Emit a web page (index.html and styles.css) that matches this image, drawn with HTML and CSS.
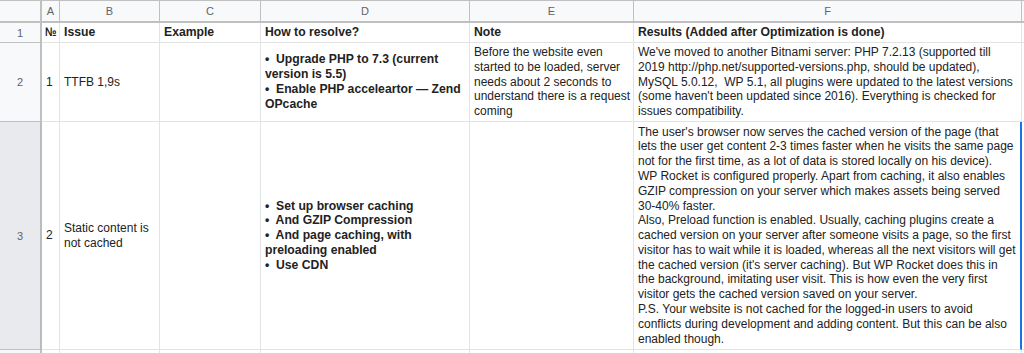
FILE: index.html
```html
<!DOCTYPE html>
<html>
<head>
<meta charset="utf-8">
<link rel="stylesheet" href="styles.css">
</head>
<body>
<div class="sheet">
  <div class="corner"></div>
  <div class="colhead">A</div>
  <div class="colhead">B</div>
  <div class="colhead">C</div>
  <div class="colhead">D</div>
  <div class="colhead">E</div>
  <div class="colhead">F</div>
  <div class="colhead rest"></div>

  <div class="rowhead">1</div>
  <div class="cell narrow bold"><span class="numero">№</span></div>
  <div class="cell bold">Issue</div>
  <div class="cell bold">Example</div>
  <div class="cell bold">How to resolve?</div>
  <div class="cell bold">Note</div>
  <div class="cell bold">Results (Added after Optimization is done)</div>
  <div class="cell rest"></div>

  <div class="rowhead">2</div>
  <div class="cell narrow">1</div>
  <div class="cell">TTFB 1,9s</div>
  <div class="cell"></div>
  <div class="cell bold">
    <p>•&nbsp; Upgrade PHP to 7.3 (current<br>version is 5.5)</p>
    <p>•&nbsp; Enable PHP acceleartor — Zend<br>OPcache</p>
  </div>
  <div class="cell">
    <p>Before the website even<br>started to be loaded, server<br>needs about 2 seconds to<br>understand there is a request<br>coming</p>
  </div>
  <div class="cell">
    <p>We've moved to another Bitnami server: PHP 7.2.13 (supported till<br>2019 http://php.net/supported-versions.php, should be updated),<br>MySQL 5.0.12,&nbsp; WP 5.1, all plugins were updated to the latest versions<br>(some haven't been updated since 2016). Everything is checked for<br>issues compatibility.</p>
  </div>
  <div class="cell rest"></div>

  <div class="rowhead selected">3</div>
  <div class="cell narrow">2</div>
  <div class="cell"><p>Static content is<br>not cached</p></div>
  <div class="cell"></div>
  <div class="cell bold">
    <p>•&nbsp; Set up browser caching</p>
    <p>•&nbsp; And GZIP Compression</p>
    <p>•&nbsp; And page caching, with<br>preloading enabled</p>
    <p>•&nbsp; Use CDN</p>
  </div>
  <div class="cell"></div>
  <div class="cell active">
    <p>The user's browser now serves the cached version of the page (that<br>lets the user get content 2-3 times faster when he visits the same page<br>not for the first time, as a lot of data is stored locally on his device).</p>
    <p>WP Rocket is configured properly. Apart from caching, it also enables<br>GZIP compression on your server which makes assets being served<br>30-40% faster.</p>
    <p>Also, Preload function is enabled. Usually, caching plugins create a<br>cached version on your server after someone visits a page, so the first<br>visitor has to wait while it is loaded, whereas all the next visitors will get<br>the cached version (it's server caching). But WP Rocket does this in<br>the background, imitating user visit. This is how even the very first<br>visitor gets the cached version saved on your server.</p>
    <p>P.S. Your website is not cached for the logged-in users to avoid<br>conflicts during development and adding content. But this can be also<br>enabled though.</p>
  </div>
  <div class="cell rest"></div>

  <div class="rowhead"></div>
  <div class="cell narrow"></div>
  <div class="cell"></div>
  <div class="cell"></div>
  <div class="cell"></div>
  <div class="cell"></div>
  <div class="cell"></div>
  <div class="cell rest"></div>
</div>
</body>
</html>
```

FILE: styles.css
```css
html, body {
  margin: 0;
  padding: 0;
  background: #ffffff;
  overflow: hidden;
}

.sheet {
  display: grid;
  grid-template-columns: 42px 18px 100px 101px 209px 164px 388px 1fr;
  grid-template-rows: 23px 20px 79px 228px 20px;
  font-family: "Liberation Sans", Arial, sans-serif;
  font-size: 12px;
  color: #222222;
  width: 1024px;
}

.corner,
.colhead,
.rowhead {
  box-sizing: border-box;
  background: #f8f9fa;
  color: #5f6368;
  font-size: 11px;
  display: flex;
  align-items: center;
  justify-content: center;
}

.corner {
  border-right: 2px solid #c0c0c0;
  border-bottom: 2px solid #c0c0c0;
  border-top: 1px solid #c0c0c0;
}

.colhead {
  border-top: 1px solid #c0c0c0;
  border-right: 1px solid #c0c0c0;
  border-bottom: 2px solid #c0c0c0;
}

.rowhead {
  border-right: 2px solid #c0c0c0;
  border-bottom: 1px solid #c0c0c0;
}

.rowhead.selected {
  background: #e8eaed;
  border-right-color: #b8bcc0;
}

.cell {
  box-sizing: border-box;
  border-right: 1px solid #e2e3e3;
  border-bottom: 1px solid #e2e3e3;
  padding: 0 3px 0 4px;
  line-height: 14.8px;
  white-space: nowrap;
  display: flex;
  flex-direction: column;
  justify-content: center;
  overflow: hidden;
}

.cell p {
  margin: 0;
}

.cell.narrow {
  padding: 0 0 0 4px;
  overflow: visible;
}

.numero {
  display: inline-block;
  margin-left: -1px;
  letter-spacing: -1px;
  transform: scaleX(0.85);
  transform-origin: left center;
}

.bold {
  font-weight: bold;
  font-size: 12.2px;
}

.cell.active {
  border-right: 2px solid #1a73e8;
  padding-right: 0;
}

.rest {
  border-right: none;
}
```
